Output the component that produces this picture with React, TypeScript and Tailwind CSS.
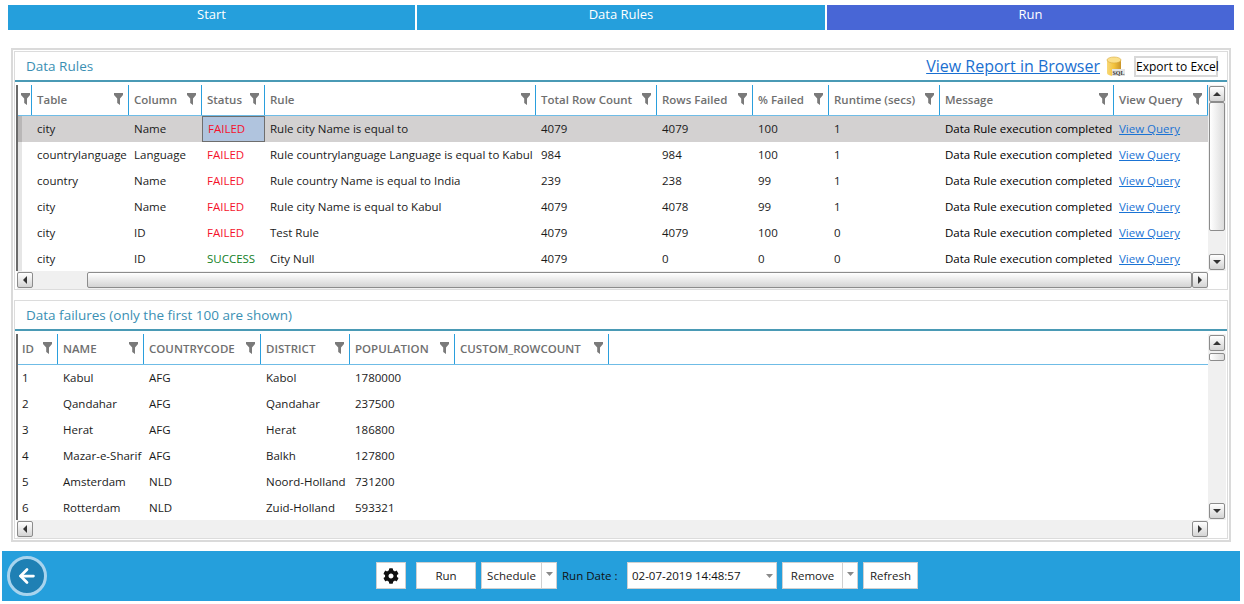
import { FaCog } from 'react-icons/fa'
import { ArrowLeft } from 'lucide-react'

const RULE_COLS = 'grid grid-cols-[14px_97px_73px_63px_271px_121px_96px_76px_111px_174px_94px]'
const FAIL_COLS = 'grid grid-cols-[40px_86px_117px_89px_105px_154px]'

const RULE_HEADERS = ['Table', 'Column', 'Status', 'Rule', 'Total Row Count', 'Rows Failed', '% Failed', 'Runtime (secs)', 'Message', 'View Query']
const FAIL_HEADERS = ['ID', 'NAME', 'COUNTRYCODE', 'DISTRICT', 'POPULATION', 'CUSTOM_ROWCOUNT']

const RULES = [
  ['city', 'Name', 'FAILED', 'Rule city Name is equal to', '4079', '4079', '100', '1'],
  ['countrylanguage', 'Language', 'FAILED', 'Rule countrylanguage Language is equal to Kabul', '984', '984', '100', '1'],
  ['country', 'Name', 'FAILED', 'Rule country Name is equal to India', '239', '238', '99', '1'],
  ['city', 'Name', 'FAILED', 'Rule city Name is equal to Kabul', '4079', '4078', '99', '1'],
  ['city', 'ID', 'FAILED', 'Test Rule', '4079', '4079', '100', '0'],
  ['city', 'ID', 'SUCCESS', 'City Null', '4079', '0', '0', '0'],
]

const FAILURES = [
  ['1', 'Kabul', 'AFG', 'Kabol', '1780000'],
  ['2', 'Qandahar', 'AFG', 'Qandahar', '237500'],
  ['3', 'Herat', 'AFG', 'Herat', '186800'],
  ['4', 'Mazar-e-Sharif', 'AFG', 'Balkh', '127800'],
  ['5', 'Amsterdam', 'NLD', 'Noord-Holland', '731200'],
  ['6', 'Rotterdam', 'NLD', 'Zuid-Holland', '593321'],
]

function FilterIcon() {
  return (
    <svg width="9" height="12" viewBox="0 0 9 12" className="shrink-0 -mt-[3px]">
      <path d="M0 0h9v2L6 5.5V12L3.2 10V5.5L0 2z" fill="#7a7a7a" />
    </svg>
  )
}

function Arrow({ dir }: { dir: 'up' | 'down' | 'left' | 'right' }) {
  const d = {
    up: 'M0 4L4 0l4 4z',
    down: 'M0 0h8L4 4z',
    left: 'M4 0v8L0 4z',
    right: 'M0 0l4 4-4 4z',
  }[dir]
  const box = dir === 'up' || dir === 'down' ? '0 0 8 4' : '0 0 4 8'
  const w = dir === 'up' || dir === 'down' ? 8 : 4
  const h = dir === 'up' || dir === 'down' ? 4 : 8
  return (
    <svg width={w} height={h} viewBox={box}>
      <path d={d} fill="#333" />
    </svg>
  )
}

function ScrollButton({ dir }: { dir: 'up' | 'down' | 'left' | 'right' }) {
  return (
    <div className="w-[16px] h-[16px] shrink-0 flex items-center justify-center rounded-[2px] border border-[#8c8c8c] bg-linear-to-b from-white to-[#d4d4d4]">
      <Arrow dir={dir} />
    </div>
  )
}

function VScroll({ thumb }: { thumb: string }) {
  return (
    <div className="w-[18px] shrink-0 bg-[#f0f0f0] flex flex-col items-center pt-[1px] pb-[1px]">
      <ScrollButton dir="up" />
      <div className={`w-[16px] rounded-[2px] border border-[#8c8c8c] bg-linear-to-r from-white to-[#dcdcdc] ${thumb}`} />
      <div className="flex-1" />
      <ScrollButton dir="down" />
    </div>
  )
}

function HeaderRow({ cols, labels, gutter }: { cols: string; labels: string[]; gutter: boolean }) {
  return (
    <div className={`${cols} h-[31px] border-b border-[#6fbce6] bg-white`}>
      {gutter && (
        <div className="border-r border-[#2a9fdd] flex items-center pl-[3px]">
          <FilterIcon />
        </div>
      )}
      {labels.map((label, i) => (
        <div
          key={label}
          className={`border-r border-[#2a9fdd] flex items-center justify-between pr-[5px] font-semibold text-[#6f6f6f] whitespace-nowrap ${!gutter && i === 0 ? 'pl-[4px]' : 'pl-[5px]'}`}
        >
          <span>{label}</span>
          <FilterIcon />
        </div>
      ))}
    </div>
  )
}

function Panel({ title, right, children }: { title: string; right?: React.ReactNode; children: React.ReactNode }) {
  return (
    <section className="border border-[#dcdcdc] pl-[1px] flex flex-col">
      <div className="h-[28px] flex items-center justify-between pl-[10px] pr-[9px]">
        <h2 className="text-[13.5px] text-[#3b8fb3] font-normal">{title}</h2>
        {right}
      </div>
      <div className="h-[2px] bg-[#4a9ab5] -ml-[1px]" />
      {children}
    </section>
  )
}

function RulesGrid() {
  return (
    <>
      <div className="h-[186px] mt-[3px] flex border-l-2 border-[#6b6b6b]">
        <div className="w-[1190px] shrink-0 overflow-hidden">
          <HeaderRow cols={RULE_COLS} labels={RULE_HEADERS} gutter />
          {RULES.map((row, i) => (
            <div key={i} className={`${RULE_COLS} h-[26px] items-center whitespace-nowrap ${i === 0 ? 'bg-[#d3d1d1]' : ''}`}>
              <div className={`h-full w-[4px] ${i === 0 ? 'bg-[#b9b7b7]' : 'bg-[#e6e6e6]'}`} />
              {row.map((cell, c) => (
                <div
                  key={c}
                  className={`pl-[5px] h-full flex items-center overflow-hidden ${
                    c === 2 ? (cell === 'FAILED' ? 'text-[#f5112b]' : 'text-[#12801f]') : 'text-[#1a1a1a]'
                  } ${c === 2 && i === 0 ? 'bg-[#b0c4de] border border-[#6e6e6e] pl-[4px]' : ''}`}
                >
                  {cell}
                </div>
              ))}
              <div className="pl-[5px]">Data Rule execution completed</div>
              <a href="#" className="pl-[5px] text-[#1a73d4] underline">View Query</a>
            </div>
          ))}
        </div>
        <VScroll thumb="h-[129px]" />
      </div>
      <div className="h-[18px] flex items-center bg-[#f0f0f0] ml-[1px] mr-[19px]">
        <ScrollButton dir="left" />
        <div className="ml-[54px] flex-1 h-[16px] rounded-[2px] border border-[#8c8c8c] bg-linear-to-b from-white to-[#d4d4d4]" />
        <ScrollButton dir="right" />
      </div>
    </>
  )
}

function FailuresGrid() {
  return (
    <>
      <div className="h-[186px] mt-[3px] flex border-l-2 border-[#6b6b6b]">
        <div className="w-[1190px] shrink-0 overflow-hidden">
          <HeaderRow cols={FAIL_COLS} labels={FAIL_HEADERS} gutter={false} />
          {FAILURES.map(row => (
            <div key={row[0]} className={`${FAIL_COLS} h-[26px] items-center whitespace-nowrap text-[#1a1a1a]`}>
              {row.map((cell, c) => (
                <div key={c} className={`h-full flex items-center overflow-hidden ${c === 0 ? 'pl-[4px]' : 'pl-[5px]'}`}>
                  {cell}
                </div>
              ))}
            </div>
          ))}
        </div>
        <VScroll thumb="mt-[2px] h-[8px]" />
      </div>
      <div className="h-[18px] flex items-center bg-[#f0f0f0] ml-[1px] mr-[19px]">
        <ScrollButton dir="left" />
        <div className="flex-1" />
        <ScrollButton dir="right" />
      </div>
    </>
  )
}

function SqlIcon() {
  return (
    <svg width="20" height="21" viewBox="0 0 20 21" className="shrink-0">
      <defs>
        <linearGradient id="gold" x1="0" x2="1" y1="0" y2="0">
          <stop offset="0" stopColor="#f8d878" />
          <stop offset="0.5" stopColor="#f3c33c" />
          <stop offset="1" stopColor="#c9942a" />
        </linearGradient>
      </defs>
      <path d="M1 4v13c0 1.6 3 3 7 3s7-1.4 7-3V4z" fill="url(#gold)" />
      <ellipse cx="8" cy="4" rx="7" ry="3" fill="#fbe08a" stroke="#d8a93a" strokeWidth="0.6" />
      <rect x="6" y="13" width="13" height="7" fill="#e4e4e4" />
      <text x="12.5" y="19" textAnchor="middle" fontSize="6" fontWeight="700" fill="#333" fontFamily="Liberation Serif, serif">SQL</text>
    </svg>
  )
}

function Btn({ children, width }: { children: React.ReactNode; width: string }) {
  return (
    <button className={`h-[27px] ${width} shrink-0 bg-white border border-[#d0d0d0] flex items-center justify-center text-[#222]`}>
      {children}
    </button>
  )
}

function Caret() {
  return (
    <svg width="7" height="4" viewBox="0 0 7 4">
      <path d="M0 0h7L3.5 4z" fill="#8a8a8a" />
    </svg>
  )
}

function SplitBtn({ label, width }: { label: string; width: string }) {
  return (
    <div className="h-[27px] flex shrink-0 bg-white border border-[#d0d0d0] text-[#222]">
      <div className={`${width} flex items-center justify-center border-r border-[#d0d0d0]`}>{label}</div>
      <div className="w-[14px] flex items-center justify-center pb-[3px]"><Caret /></div>
    </div>
  )
}

export default function App() {
  return (
    <div className="w-[1244px] h-[604px] bg-white overflow-hidden font-['Open_Sans',sans-serif] text-[11.5px]">
      <nav className="pt-[5px] pl-[8px] flex gap-[2px] text-white text-[13px]">
        <div className="w-[407px] h-[25px] bg-[#259fdc] flex items-center justify-center pb-[5px]">Start</div>
        <div className="w-[408px] h-[25px] bg-[#259fdc] flex items-center justify-center pb-[5px]">Data Rules</div>
        <div className="w-[407px] h-[25px] bg-[#4866d6] flex items-center justify-center pb-[5px]">Run</div>
      </nav>

      <main className="mt-[18px] ml-[11px] w-[1220px] h-[494px] border-2 border-[#dadada] pl-[1px] pr-[1px] pt-[1px] flex flex-col gap-[10px]">
        <Panel
          title="Data Rules"
          right={
            <div className="flex items-center">
              <a href="#" className="text-[16px] text-[#1a6fd0] underline mr-[6px]">View Report in Browser</a>
              <SqlIcon />
              <button className="ml-[8px] w-[84px] h-[21px] border-2 border-[#d8d8d8] bg-white text-black text-[12px] whitespace-nowrap">Export to Excel</button>
            </div>
          }
        >
          <RulesGrid />
        </Panel>
        <Panel title="Data failures (only the first 100 are shown)">
          <FailuresGrid />
        </Panel>
      </main>

      <footer className="mt-[9px] ml-[2px] w-[1238px] h-[50px] bg-[#259fdc] relative flex items-center pb-[1px]">
        <div className="ml-[5px] w-[40px] h-[40px] rounded-full bg-[#1f80b4] border-[3px] border-[#a8d4ee] flex items-center justify-center">
          <ArrowLeft size={22} strokeWidth={3} color="white" />
        </div>
        <div className="ml-[329px] flex items-center">
          <Btn width="w-[30px]"><FaCog size={16} color="#111" /></Btn>
          <div className="ml-[10px]"><Btn width="w-[60px]">Run</Btn></div>
          <div className="ml-[5px]"><SplitBtn label="Schedule" width="w-[60px]" /></div>
          <span className="ml-[5px] w-[65px] text-[#111] whitespace-nowrap">Run Date :</span>
          <div className="w-[150px] h-[27px] bg-white border border-[#d0d0d0] flex items-center justify-between pl-[4px] pr-[3px] text-[#111] shrink-0">
            <span>02-07-2019 14:48:57</span>
            <Caret />
          </div>
          <div className="ml-[5px]"><SplitBtn label="Remove" width="w-[60px]" /></div>
          <div className="ml-[5px]"><Btn width="w-[55px]">Refresh</Btn></div>
        </div>
      </footer>
    </div>
  )
}
